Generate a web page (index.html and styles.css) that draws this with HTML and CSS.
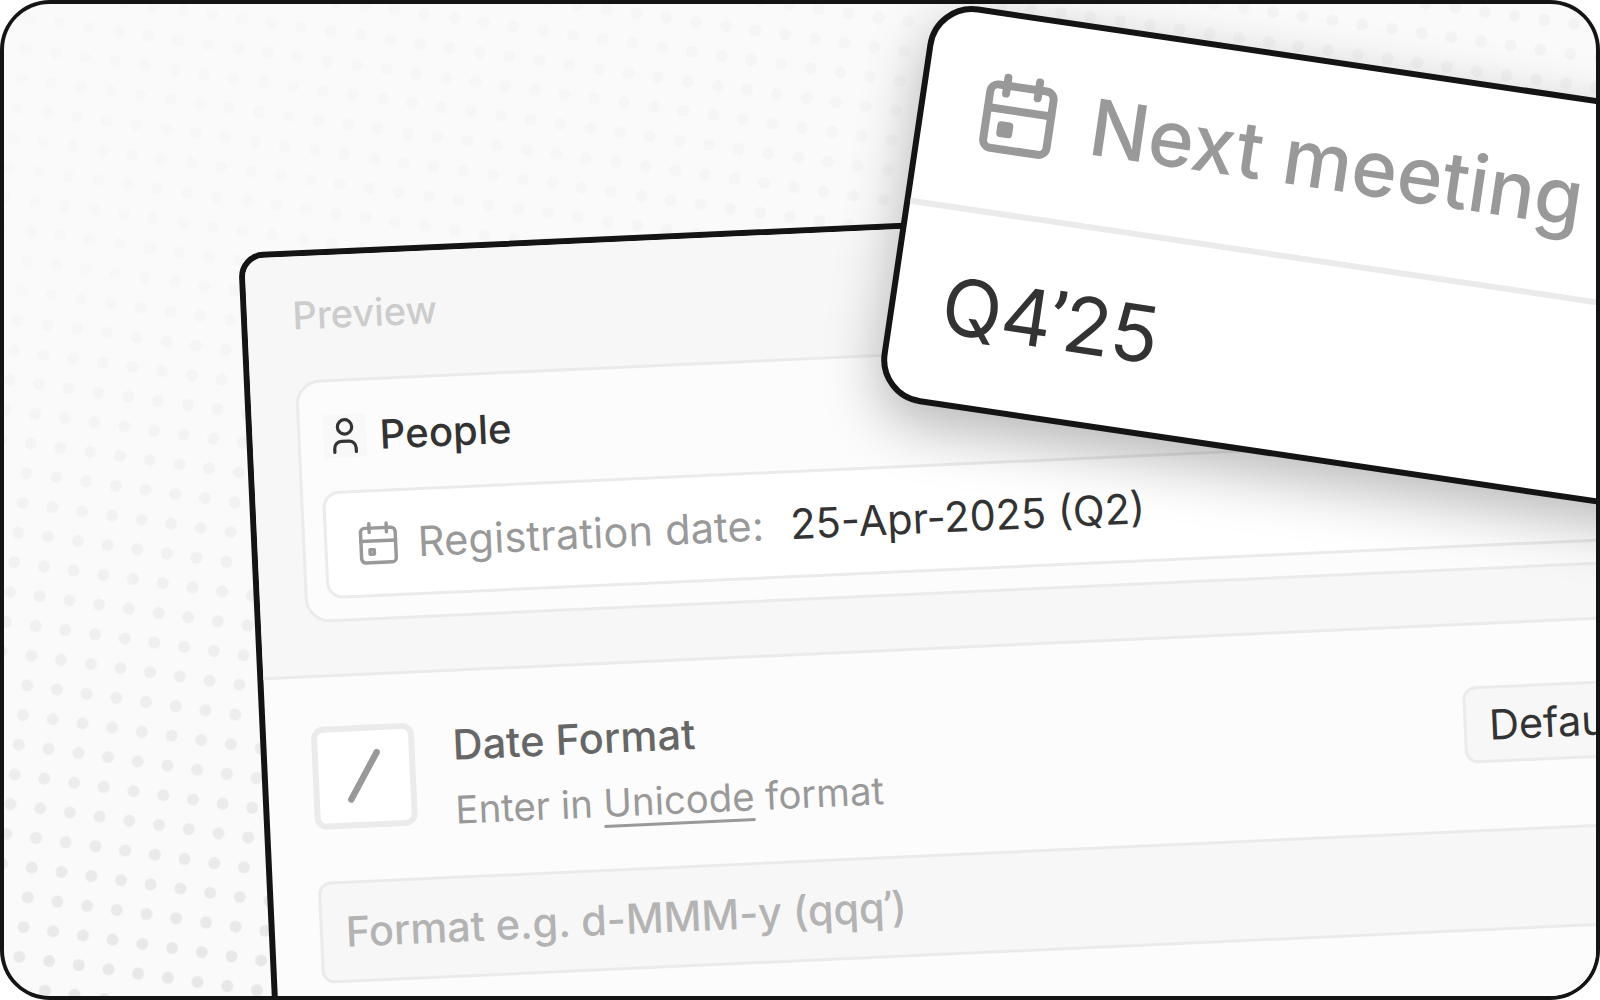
FILE: index.html
```html
<!DOCTYPE html>
<html lang="en">
<head>
<meta charset="utf-8">
<title>Date format</title>
<link rel="stylesheet" href="styles.css">
</head>
<body>
<svg class="defs" width="0" height="0" aria-hidden="true">
  <symbol id="calendar" viewBox="0 0 24 24">
    <rect x="4" y="5" width="16" height="16" rx="2"/>
    <path d="M16 3v4M8 3v4M4 11h16M8 15h2v2H8z"/>
  </symbol>
</svg>
<div class="frame">
  <div class="stage">
    <svg class="dots" viewBox="4 4 1592 992" aria-hidden="true">
      <defs>
        <pattern id="dot" width="30" height="30" patternUnits="userSpaceOnUse" patternTransform="translate(23 715) rotate(8) translate(-15 -15)">
          <circle cx="15" cy="15" r="6" fill="#000"/>
        </pattern>
        <linearGradient id="fade" gradientUnits="userSpaceOnUse" x1="60" y1="270" x2="160" y2="1000">
          <stop offset="0" stop-color="#fff" stop-opacity=".007"/>
          <stop offset="1" stop-color="#fff" stop-opacity=".07"/>
        </linearGradient>
        <linearGradient id="fade-top" gradientUnits="userSpaceOnUse" x1="0" y1="0" x2="1600" y2="0">
          <stop offset="0" stop-color="#fff" stop-opacity=".002"/>
          <stop offset="1" stop-color="#fff" stop-opacity=".022"/>
        </linearGradient>
        <mask id="dot-mask" maskUnits="userSpaceOnUse" x="0" y="0" width="1600" height="1000">
          <rect width="1600" height="1000" fill="url(#fade)"/>
          <rect width="1600" height="1000" fill="url(#fade-top)"/>
        </mask>
      </defs>
      <rect width="1600" height="1000" fill="url(#dot)" mask="url(#dot-mask)"/>
    </svg>

    <section class="panel">
      <div class="preview">
        <div class="preview-label">Preview</div>
        <div class="card">
          <div class="card-title">
            <span class="avatar">
              <svg viewBox="0 0 24 24"><circle cx="12" cy="7" r="4"/><path d="M6 21v-2a4 4 0 0 1 4-4h4a4 4 0 0 1 4 4v2"/></svg>
            </span>
            <span>People</span>
          </div>
          <div class="field">
            <svg class="field-icon"><use href="#calendar"/></svg>
            <span class="field-name">Registration date:</span>
            <span class="field-value">25-Apr-2025 (Q2)</span>
          </div>
        </div>
      </div>
      <div class="settings">
        <div class="setting">
          <div class="key"><svg viewBox="0 0 90 90"><path d="M31.4 68.1 58.9 21.9"/></svg></div>
          <div class="setting-text">
            <div class="setting-title">Date Format</div>
            <div class="setting-hint">Enter in <span class="link">Unicode</span> format</div>
          </div>
          <div class="select">Default</div>
        </div>
        <div class="input">Format e.g. d-MMM-y (qqq<span class="apos">’</span>)</div>
      </div>
    </section>

    <section class="meeting">
      <div class="meeting-head">
        <svg class="meeting-icon"><use href="#calendar"/></svg>
        <span class="meeting-name">Next meeting</span>
      </div>
      <div class="meeting-value">Q4<span class="apos">’</span>25</div>
    </section>
  </div>
</div>
</body>
</html>
```
FILE: styles.css
```css
* { box-sizing: border-box; }

body {
  margin: 0;
  background: #fff;
  font-family: Inter, "Liberation Sans", sans-serif;
  white-space: nowrap;
}

svg {
  display: block;
  flex: none;
  fill: none;
  stroke-linecap: round;
  stroke-linejoin: round;
}

.defs { position: absolute; }

.apos {
  margin: 0 -.03em 0 -.02em;
  font-family: Roboto, sans-serif;
  line-height: 1;
}

.frame {
  width: 1600px;
  height: 1000px;
  padding: 4px;
  background: #141414;
  border-radius: 50px;
  overflow: hidden;
}

.stage {
  position: relative;
  width: 100%;
  height: 100%;
  background: #fafafa;
  border-radius: 45.5px;
  overflow: hidden;
}

.dots { width: 100%; height: 100%; }

/* Settings panel, tilted left */
.panel {
  position: absolute;
  left: 234px;
  top: 248.7px;
  width: 1494px;
  height: 900px;
  border: 6px solid #141414;
  border-radius: 25px;
  background: #fcfcfc;
  overflow: hidden;
  transform: rotate(-2.6deg);
  transform-origin: 0 0;
}

.preview {
  height: 421.5px;
  padding: 39px 45px 0;
  background: #f7f7f7;
  border-bottom: 3px solid #ebebeb;
}

.preview-label {
  margin-left: .5px;
  font-size: 38px;
  line-height: 40px;
  font-weight: 500;
  color: #ccc;
}

.card {
  margin-top: 45px;
  height: 243px;
  padding: 33.3px 19.3px 0;
  border: 3px solid #ebebeb;
  border-radius: 25px;
  background: #fcfcfc;
}

.card-title {
  display: flex;
  gap: 13.5px;
  margin-left: 3.5px;
  font-size: 40px;
  line-height: 43px;
  font-weight: 500;
  letter-spacing: .1px;
  color: #333;
}

.avatar {
  width: 43px;
  height: 43px;
  background: #f8f8f8;
}

.avatar svg {
  width: 43px;
  height: 43px;
  stroke: #333;
  stroke-width: 1.8;
}

.field {
  display: flex;
  align-items: center;
  height: 108px;
  margin-top: 33px;
  padding-left: 25.2px;
  border: 3px solid #ebebeb;
  border-radius: 17px;
  background: #fff;
  font-size: 41.5px;
  line-height: 50px;
}

.field-icon {
  width: 52px;
  height: 52px;
  stroke: #999;
  stroke-width: 1.6;
}

.field-name {
  margin-left: 13px;
  letter-spacing: .2px;
  color: #999;
}

.field-value {
  margin-left: 26.5px;
  color: #333;
}

.settings { padding: 49.5px 45px 0; }

.setting {
  display: flex;
  align-items: flex-start;
  height: 113px;
}

.key {
  width: 102.5px;
  height: 102.5px;
  border: 6px solid #ebebeb;
  border-radius: 12px;
  background: #fff;
}

.key svg {
  width: 90px;
  height: 90px;
  stroke: #999;
  stroke-width: 6.4;
}

.setting-text {
  display: flex;
  flex-direction: column;
  gap: 17px;
  margin-left: 38.5px;
  line-height: 48px;
}

.setting-title {
  font-size: 41.5px;
  font-weight: 500;
  letter-spacing: .1px;
  color: #666;
}

.setting-hint {
  font-size: 38.35px;
  color: #999;
}

.link {
  text-decoration: underline;
  text-decoration-thickness: 2.6px;
  text-underline-offset: 7.8px;
}

.select {
  width: 240px;
  height: 77px;
  margin: 11.5px 0 0 auto;
  padding-left: 22.3px;
  border: 3px solid #ebebeb;
  border-radius: 13px;
  background: #f7f7f7;
  font-size: 41.5px;
  line-height: 73px;
  color: #333;
}

.input {
  height: 102.5px;
  margin-top: 41.5px;
  padding-left: 23px;
  border: 3px solid #ebebeb;
  border-radius: 13px;
  background: #f7f7f7;
  font-size: 41.5px;
  line-height: 97px;
  font-weight: 500;
  letter-spacing: -.06px;
  color: #b3b3b3;
}

/* Floating property card, tilted right */
.meeting {
  position: absolute;
  left: 929.7px;
  top: -4.4px;
  width: 900px;
  height: 402px;
  border: 6px solid #141414;
  border-radius: 45px;
  background: #fff;
  box-shadow: 0 20px 56px rgba(0, 0, 0, .27);
  transform: rotate(8.42deg);
  transform-origin: 0 0;
}

.meeting-head {
  display: flex;
  align-items: center;
  height: 198.5px;
  padding-left: 46.5px;
  border-bottom: 6px solid #ebebeb;
}

.meeting-icon {
  width: 96px;
  height: 96px;
  stroke: #999;
  stroke-width: 2;
}

.meeting-name {
  margin-left: 25px;
  font-size: 78px;
  line-height: 96px;
  font-weight: 500;
  color: #999;
}

.meeting-value {
  padding: 47px 0 0 47px;
  font-size: 78.5px;
  line-height: 96px;
  color: #333;
}
```
